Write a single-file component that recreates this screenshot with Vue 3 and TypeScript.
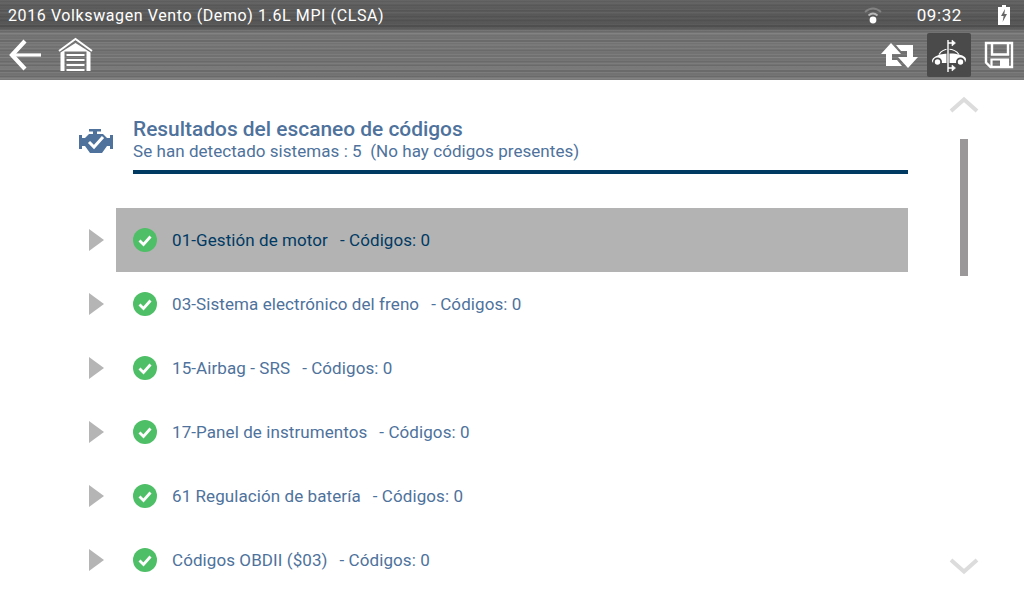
<script setup lang="ts">
const rows = [
  { name: '01-Gestión de motor', selected: true },
  { name: '03-Sistema electrónico del freno', selected: false },
  { name: '15-Airbag - SRS', selected: false },
  { name: '17-Panel de instrumentos', selected: false },
  { name: '61 Regulación de batería', selected: false },
  { name: 'Códigos OBDII ($03)', selected: false },
]
</script>

<template>
  <div class="screen">
    <header class="head">
      <div class="status">
        <span class="vehicle">2016 Volkswagen Vento (Demo) 1.6L MPI (CLSA)</span>
        <svg class="wifi" width="20" height="18" viewBox="0 0 20 18">
          <path d="M2 6 Q10 -1 18 6" fill="none" stroke="#828282" stroke-width="1.8" />
          <path d="M5.5 9.5 Q10 5.5 14.5 9.5" fill="none" stroke="#b8b8b8" stroke-width="1.8" />
          <circle cx="10" cy="14" r="3.4" fill="#fff" />
        </svg>
        <span class="clock">09:32</span>
        <svg class="batt" width="12" height="20" viewBox="0 0 12 20">
          <path d="M4 0H8V2H12V20H0V2H4Z" fill="#fff" />
          <path d="M7 4L3 11H5.6L4.6 17L9 9H6.4Z" fill="#666" />
        </svg>
      </div>
      <div class="tools">
        <div class="group">
          <svg width="36" height="34" viewBox="0 0 36 34" class="back">
            <path d="M33 17H5" fill="none" stroke="#fff" stroke-width="3.2" />
            <path d="M17 3L4 17L17 31" fill="none" stroke="#fff" stroke-width="4.2" />
          </svg>
          <svg width="36" height="36" viewBox="0 0 36 36" class="home">
            <path d="M1 14L17.5 2L34 14" fill="none" stroke="#fff" stroke-width="2" />
            <path d="M2.5 15.5L17.5 6L32.5 15.5V34H28.5V14.5H6.5V34H2.5Z" fill="#fff" />
            <path d="M8.5 18H26.5M8.5 23H26.5M8.5 28H26.5M8.5 33H26.5" stroke="#fff" stroke-width="2" />
          </svg>
        </div>
        <div class="group right">
          <svg width="37" height="27" viewBox="0 0 37 27" class="swap">
            <path d="M10 1L0 12H5V24H21L16 18H11V12H20Z" fill="#fff" />
            <path d="M27 26L37 15H32V3H15L20 9H26V15H17Z" fill="#fff" />
          </svg>
          <div class="active">
            <svg width="44" height="44" viewBox="0 0 44 44">
              <path d="M12 21.5C16 14.5 27 14.5 32 21.5" fill="none" stroke="#fff" stroke-width="1.2" />
              <path d="M5 27.5C5.5 24.5 9 23 13 21.5C20 20 28 20 32 21.5C36 22.5 39 24 39 26.5C39 29 37.5 30 36 30H8C6 30 5 29.5 5 27.5Z" fill="#fff" />
              <circle cx="10.5" cy="29" r="3.6" fill="#fff" stroke="#4a4a4a" stroke-width="1.8" />
              <circle cx="33.5" cy="29" r="3.6" fill="#fff" stroke="#4a4a4a" stroke-width="1.8" />
              <path d="M21 7V39" stroke="#4a4a4a" stroke-width="3" />
              <path d="M21 7V39" stroke="#fff" stroke-width="1.4" />
              <path d="M21 10H26M21 35H26" stroke="#fff" stroke-width="1.4" />
              <path d="M25 7L28.5 10L25 13ZM25 32L28.5 35L25 38Z" fill="#fff" stroke="#fff" stroke-width="0.6" />
            </svg>
          </div>
          <svg width="30" height="28" viewBox="0 0 30 28" class="save">
            <path d="M2 2H28V26H6.5L2 21.5Z" fill="none" stroke="#fff" stroke-width="2.4" />
            <path d="M8 2V13.5H24V2" fill="none" stroke="#fff" stroke-width="2.4" />
            <path d="M7.5 26V18.5H24V26" fill="none" stroke="#fff" stroke-width="2.2" />
            <rect x="16" y="19" width="7" height="7" fill="#fff" />
          </svg>
        </div>
      </div>
    </header>

    <main class="body">
      <section class="content">
        <div class="title-block">
          <svg class="engine" width="36" height="26" viewBox="0 0 36 26">
            <path d="M11 1H23V3.5H19V6H25L29 10H32V7H35V21H32V18H29L24 25H12L7 18H4V21H1V7H4V10H7L11 6H15V3.5H11Z" fill="#4e729c" />
            <path d="M11 14L16 19L25 9" fill="none" stroke="#fff" stroke-width="3" />
          </svg>
          <div class="titles">
            <h1>Resultados del escaneo de códigos</h1>
            <p>Se han detectado sistemas : 5&nbsp;&nbsp;(No hay códigos presentes)</p>
          </div>
        </div>
        <ul class="list">
          <li v-for="row in rows" :key="row.name" class="row">
            <span class="caret"></span>
            <div class="item" :class="{ selected: row.selected }">
              <svg class="ok" width="24" height="24" viewBox="0 0 24 24">
                <circle cx="12" cy="12" r="12" fill="#4fbf67" />
                <path d="M6.5 12.5L10.5 16.5L17.5 8.5" fill="none" stroke="#fff" stroke-width="2.8" />
              </svg>
              <span class="label">{{ row.name }}</span>
              <span class="codes">- Códigos: 0</span>
            </div>
          </li>
        </ul>
      </section>
      <aside class="scroll">
        <svg class="chev" width="30" height="18" viewBox="0 0 30 18">
          <path d="M2 15L15 3.5L28 15" fill="none" stroke="#dcdcdc" stroke-width="4" />
        </svg>
        <div class="track"><div class="thumb"></div></div>
        <svg class="chev" width="30" height="18" viewBox="0 0 30 18">
          <path d="M2 3L15 14.5L28 3" fill="none" stroke="#dcdcdc" stroke-width="4" />
        </svg>
      </aside>
    </main>
  </div>
</template>

<style>
html, body { margin: 0; background: #fff; }
</style>

<style scoped>
.screen {
  width: 1024px;
  height: 600px;
  overflow: hidden;
  display: flex;
  flex-direction: column;
  font-family: Roboto, "Liberation Sans", sans-serif;
  background: #fff;
}
.head {
  height: 80px;
  flex: none;
  display: flex;
  flex-direction: column;
  color: #fff;
  background:
    repeating-linear-gradient(180deg, rgba(255,255,255,0.07) 0 1px, rgba(0,0,0,0) 1px 3px),
    repeating-linear-gradient(180deg, rgba(0,0,0,0.07) 0 2px, rgba(0,0,0,0) 2px 5px),
    repeating-linear-gradient(180deg, rgba(255,255,255,0.05) 0 3px, rgba(0,0,0,0) 3px 11px),
    #727272;
}
.status {
  height: 30px;
  flex: none;
  display: flex;
  align-items: center;
  background: linear-gradient(180deg, rgba(60,60,60,0.35), rgba(50,50,50,0.5) 90%, rgba(50,50,50,0.2));
  padding: 0 14px 0 8px;
  font-size: 16px;
  letter-spacing: 0.6px;
}
.vehicle { flex: 1; }
.wifi { margin-right: 34px; }
.clock { margin-right: 36px; font-size: 17px; }
.tools {
  flex: 1;
  display: flex;
  justify-content: space-between;
  align-items: center;
}
.group { display: flex; align-items: center; }
.back { margin-left: 8px; }
.home { margin-left: 14px; }
.right { gap: 0; padding-right: 10px; }
.swap { margin-right: 9px; }
.active {
  width: 44px;
  height: 44px;
  border-radius: 2px;
  background: #4a4a4a;
  display: flex;
  align-items: center;
  justify-content: center;
  margin-right: 13px;
}
.body { flex: 1; display: flex; min-height: 0; }
.content { width: 908px; flex: none; padding-left: 78px; box-sizing: border-box; }
.title-block { display: flex; height: 94px; padding-top: 38px; box-sizing: border-box; border: 0; }
.engine { margin-top: 10px; }
.titles {
  margin-left: 19px;
  flex: 1;
  height: 56px;
  box-sizing: border-box;
  border-bottom: 4px solid #003a63;
  margin-top: 0;
}
h1 {
  margin: 0;
  font-size: 20.9px;
  line-height: 22px;
  font-weight: 500;
  color: #4e729c;
}
p {
  margin: 0;
  font-size: 17px;
  line-height: 22px;
  letter-spacing: 0.05px;
  color: #4e729c;
}
.list { list-style: none; margin: 34px 0 0; padding: 0; }
.row { height: 64px; display: flex; align-items: center; }
.caret {
  width: 0;
  height: 0;
  margin-left: 11px;
  border-left: 15px solid #b5b5b5;
  border-top: 11px solid transparent;
  border-bottom: 11px solid transparent;
}
.item {
  margin-left: 12px;
  flex: 1;
  height: 64px;
  display: flex;
  align-items: center;
  padding-left: 17px;
  font-size: 17px;
  letter-spacing: 0.08px;
  color: #4e729c;
}
.item.selected { background: #b3b3b3; color: #003a63; }
.label { margin-left: 15px; }
.codes { margin-left: 12px; }
.scroll {
  flex: 1;
  display: flex;
  flex-direction: column;
  align-items: center;
  padding-right: 4px;
  box-sizing: border-box;
  position: relative;
}
.chev { position: absolute; left: 41px; top: 16px; }
.chev:last-child { top: 477px; }
.track { margin-top: 59px; width: 8px; }
.thumb { width: 8px; height: 137px; background: #9a9899; }
</style>
